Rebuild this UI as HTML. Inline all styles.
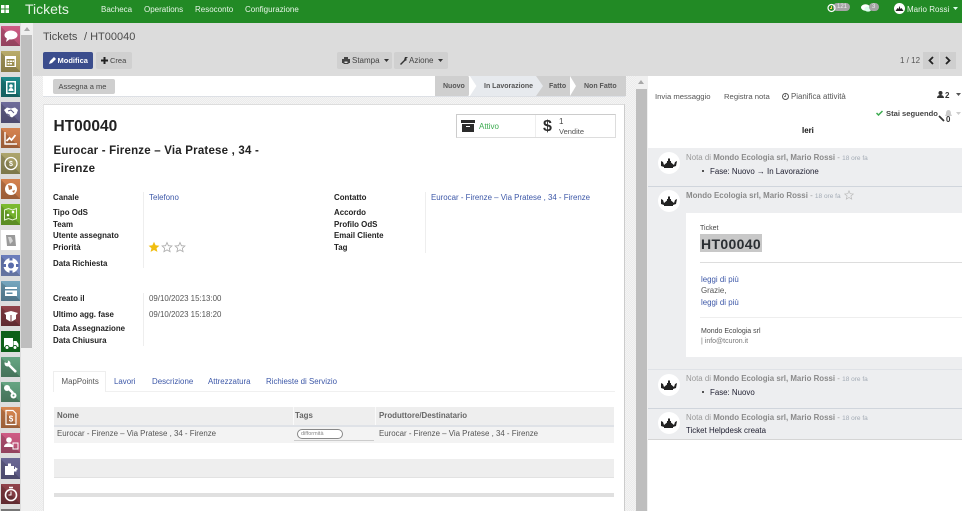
<!DOCTYPE html>
<html><head><meta charset="utf-8"><title>Tickets</title>
<style>
html,body{margin:0;padding:0;width:962px;height:511px;overflow:hidden;background:#fff;font-family:"Liberation Sans",sans-serif;color:#333}
#w{position:absolute;left:0;top:0;width:962px;height:511px;overflow:hidden;filter:blur(.3px)}
.b{position:absolute}
.t{position:absolute;white-space:nowrap;line-height:10px;font-size:7.9px;margin-top:1px}
.s{font-weight:bold;color:#222}
.l{color:#3d58a8}
.m{color:#e8f5e8;font-size:8px}
.i{position:absolute;left:1px;width:19px;height:20.5px;overflow:hidden}
.i::before{content:"";position:absolute;left:0;top:0;right:0;bottom:0;background:linear-gradient(45deg,rgba(0,0,0,.17) 50%,transparent 50%)}
.i svg{position:absolute;left:0;top:0}
.n::before{display:none}
.g{color:#9a9a9a;font-size:7.9px}
.g b{color:#8a8a8a}
.g small{font-size:6.5px;color:#a3abb5}
.pat{background:repeating-conic-gradient(#f4f4f4 0 25%,#ebebeb 0 50%) 0 0/2px 2px}
</style></head><body><div id="w">

<!-- top bar -->
<div class="b" style="left:0;top:0;width:962px;height:23px;background:#228a25"></div>
<svg class="b" style="left:1px;top:5px" width="8" height="8"><path d="M0 0h3.500v3.500H0zM4.500 0H8v3.500H4.500zM0 4.500h3.500V8H0zM4.500 4.500H8V8H4.500z" fill="#fff"/></svg>
<div class="t" style="left:25px;top:3px;font-size:14px;color:#e6f3e6">Tickets</div>
<div class="t m" style="left:101px;top:3.500px">Bacheca</div>
<div class="t m" style="left:144px;top:3.500px">Operations</div>
<div class="t m" style="left:195px;top:3.500px">Resoconto</div>
<div class="t m" style="left:245px;top:3.500px">Configurazione</div>
<div class="b" style="left:833px;top:3px;width:17px;height:8px;background:#a5a5a5;border-radius:4px"></div>
<div class="t" style="left:837px;top:1px;font-size:6px;color:#eee">121</div>
<svg class="b" style="left:827px;top:3px" width="9" height="10"><circle cx="4.500" cy="5" r="3.500" fill="none" stroke="#fff" stroke-width="1.200"/><path d="M4.500 3v2.500H3" stroke="#ffd75a" fill="none"/></svg>
<svg class="b" style="left:861px;top:4px" width="11" height="9"><ellipse cx="4.500" cy="3.500" rx="4.500" ry="3.200" fill="#fff"/><ellipse cx="7" cy="5" rx="3.500" ry="2.600" fill="#dfe"/></svg>
<div class="b" style="left:869px;top:3px;width:10px;height:8px;background:#a5a5a5;border-radius:4px"></div>
<div class="t" style="left:872px;top:1px;font-size:6px;color:#eee">3</div>
<svg class="b" style="left:894px;top:3px" width="11" height="11"><circle cx="5.500" cy="5.500" r="5.500" fill="#fff"/><path d="M1.500 8l2-3 1 1 1-3 1 3 1-1 2 3z" fill="#222"/></svg>
<div class="t" style="left:907px;top:3.500px;font-size:8px;color:#e8f5e8">Mario Rossi</div>
<svg class="b" style="left:953px;top:7px" width="5" height="3"><path d="M0 0h5L2.500 3z" fill="#dfe"/></svg>

<!-- sidebar -->
<div class="b" style="left:0;top:23px;width:21px;height:488px;background:#ddd"></div>
<div class="i" style="top:25.500px;background:linear-gradient(#cf5c85,#b04f70)"><svg width="19" height="21"><ellipse cx="10" cy="9" rx="6.500" ry="4.500" fill="#fff"/><path d="M6 12l-1 4 4-3z" fill="#fff"/></svg></div>
<div class="i" style="top:51px;background:linear-gradient(#b8ab6a,#a39556)"><svg width="19" height="21"><path d="M4 5h11v11H4z" fill="#fff"/><path d="M5.500 8h8v7h-8z" fill="#9a8d50"/><path d="M6.500 9.500h2v1.500h-2zM9 9.500h2v1.500H9zM11.500 9.500h1.500v1.500h-1.500zM6.500 12h2v1.500h-2zM9 12h2v1.500H9z" fill="#fff"/></svg></div>
<div class="i" style="top:76.500px;background:linear-gradient(#1f8a8a,#1a7272)"><svg width="19" height="21"><path d="M5 4h10v13H5z" fill="#fff"/><path d="M6.500 5.500h7v10h-7z" fill="#1a7c7c"/><circle cx="10" cy="9" r="1.800" fill="#fff"/><path d="M7.500 14c0-4 5-4 5 0z" fill="#fff"/></svg></div>
<div class="i" style="top:102px;background:linear-gradient(#6e6b99,#5d5a85)"><svg width="19" height="21"><path d="M3 8l3-2.500 4 1 4-1 3 2.500-1.500 4-4.500 3.500-4.500-2.500z" fill="#fff"/><path d="M7 9l3-1 3 3M6 12l3 1.500" fill="none" stroke="#5d5a85"/></svg></div>
<div class="i" style="top:127.500px;background:linear-gradient(#d4824f,#b96f42)"><svg width="19" height="21"><path d="M4 4v12h12" fill="none" stroke="#fff" stroke-width="1.400"/><path d="M5.500 13l3-3 2 2 4-5" fill="none" stroke="#fff" stroke-width="1.800"/></svg></div>
<div class="i" style="top:153px;background:linear-gradient(#ada46c,#96905a)"><svg width="19" height="21"><circle cx="10" cy="10.500" r="6" fill="none" stroke="#fff" stroke-width="1.300"/><text x="10" y="13" font-size="7" font-weight="bold" fill="#fff" text-anchor="middle" font-family="Liberation Sans">$</text></svg></div>
<div class="i" style="top:178.500px;background:linear-gradient(#d4824f,#b96f42)"><svg width="19" height="21"><circle cx="10" cy="10" r="6" fill="#fff"/><path d="M7 6l4 1 0 3-3 1zM11 12l3-1-1 3z" fill="#b96f42"/></svg></div>
<div class="i" style="top:204px;background:linear-gradient(#7dbb30,#6ba82a)"><svg width="19" height="21"><path d="M3.500 6l4-1.500 4 1.500 4-1.500v10l-4 1.500-4-1.500-4 1.500z" fill="none" stroke="#e8f5d8"/><circle cx="7" cy="11" r="1.300" fill="#fff"/><circle cx="12" cy="8" r="1.300" fill="#fff"/></svg></div>
<div class="i n" style="top:229.500px;background:#fff"><svg width="19" height="21"><path d="M5 5h9l1 11H6z" fill="#9a9a9a"/><path d="M7 7h3l2 4-3 3z" fill="#d5d5d5"/></svg></div>
<div class="i" style="top:255px;background:linear-gradient(#6a7cbb,#7a8cc0)"><svg width="19" height="21"><circle cx="10" cy="10.500" r="7.500" fill="#fff"/><circle cx="10" cy="10.500" r="3" fill="#5a6cab"/><path d="M8.500 3h3v2.500h-3zM8.500 15.500h3V18h-3zM2.500 9h2.500v3H2.500zM15 9h2.500v3H15z" fill="#5a6cab"/></svg></div>
<div class="i" style="top:280.500px;background:linear-gradient(#75a5bd,#5f8ba3)"><svg width="19" height="21"><path d="M4 6h12v9H4z" fill="#fff"/><path d="M4 8h12v1.500H4z" fill="#5f8ba3"/><path d="M5.500 11.500h6V13h-6z" fill="#5f8ba3"/></svg></div>
<div class="i" style="top:305.500px;background:linear-gradient(#91434a,#73333a)"><svg width="19" height="21"><path d="M3 7l7-2 7 2-2 2v4l-5 3-5-3V9z" fill="#fff"/><path d="M10 9v7" stroke="#7a383f"/></svg></div>
<div class="i n" style="top:331px;background:#0d5f18"><svg width="19" height="21"><path d="M3 7h9v9H3zM12.500 10h3l2 3v3h-5z" fill="#fff"/><circle cx="6" cy="16.500" r="2" fill="#fff" stroke="#0d5f18"/><circle cx="14" cy="16.500" r="2" fill="#fff" stroke="#0d5f18"/></svg></div>
<div class="i" style="top:356.500px;background:linear-gradient(#66a582,#538a6c)"><svg width="19" height="21"><path d="M6 6l6 6 3 3" stroke="#fff" stroke-width="2.600" fill="none"/><circle cx="6.500" cy="6.500" r="3" fill="#fff"/><circle cx="5.500" cy="4.500" r="1.500" fill="#5f9a78"/></svg></div>
<div class="i" style="top:381.500px;background:linear-gradient(#66a582,#538a6c)"><svg width="19" height="21"><path d="M6 5l6 6" stroke="#fff" stroke-width="2.600" fill="none"/><circle cx="6" cy="6" r="3" fill="#fff"/><circle cx="12.500" cy="13.500" r="3" fill="#fff"/><circle cx="12.500" cy="13.500" r="1" fill="#5f9a78"/></svg></div>
<div class="i" style="top:407px;background:linear-gradient(#d68650,#bb7344)"><svg width="19" height="21"><path d="M5 3.500h7l3 3v11H5z" fill="none" stroke="#fff" stroke-width="1.200"/><text x="10" y="14.500" font-size="8" font-weight="bold" fill="#fff" text-anchor="middle" font-family="Liberation Sans">$</text></svg></div>
<div class="i" style="top:432.500px;background:linear-gradient(#cf5c85,#b04f70)"><svg width="19" height="21"><circle cx="8" cy="7" r="2.800" fill="#fff"/><path d="M3 14c0-5 9-5 9 0z" fill="#fff"/><path d="M12 10h5v6h-5z" fill="none" stroke="#fff"/></svg></div>
<div class="i" style="top:458px;background:linear-gradient(#6a6794,#5c5983)"><svg width="19" height="21"><path d="M4 8h3V5.500h3V8h3v3h2.500v2.500H13v3.500H4z" fill="#fff"/><path d="M14 9l3 2-3 2z" fill="#fff"/></svg></div>
<div class="i" style="top:483.500px;background:linear-gradient(#91434a,#73333a)"><svg width="19" height="21"><circle cx="10" cy="11" r="5.500" fill="none" stroke="#fff" stroke-width="1.600"/><path d="M10 7.500V11H7.500" stroke="#fff" fill="none"/><path d="M8 3.500h4" stroke="#fff" stroke-width="1.500"/></svg></div>
<div class="i n" style="top:509px;background:#777"></div>

<!-- left scrollbar -->
<div class="b" style="left:21px;top:23px;width:12px;height:488px;background:#f0f0f0"></div>
<div class="b" style="left:21px;top:35px;width:11px;height:313px;background:#bebebe"></div>
<svg class="b" style="left:24px;top:27px" width="6" height="4"><path d="M3 0l3 4H0z" fill="#a8a8a8"/></svg>

<!-- control panel -->
<div class="b" style="left:33px;top:23px;width:929px;height:53px;background:#dcdcdc"></div>
<div class="t" style="left:43px;top:30.500px;font-size:11px;color:#4c4c4c">Tickets</div>
<div class="t" style="left:84px;top:30.500px;font-size:11px;color:#4c4c4c">/ HT00040</div>
<div class="b" style="left:43px;top:52px;width:50px;height:17px;background:#3b4d8d;border-radius:2px"></div>
<svg class="b" style="left:49px;top:57px" width="7" height="7"><path d="M0 7l1-3 4-4 2 2-4 4z" fill="#fff"/></svg>
<div class="t" style="left:57.500px;top:54.500px;font-size:7.500px;font-weight:bold;color:#fff">Modifica</div>
<div class="b" style="left:96px;top:52px;width:36px;height:17px;background:#d0d0d0;border-radius:2px"></div>
<svg class="b" style="left:101px;top:57px" width="7" height="7"><path d="M2.500 0h2v2.500H7v2H4.500V7h-2V4.500H0v-2h2.500z" fill="#222"/></svg>
<div class="t" style="left:110px;top:55px;font-size:7.500px;color:#444">Crea</div>
<div class="b" style="left:337px;top:52px;width:55px;height:17px;background:#d0d0d0;border-radius:2px"></div>
<div class="b" style="left:394px;top:52px;width:54px;height:17px;background:#d0d0d0;border-radius:2px"></div>
<svg class="b" style="left:342px;top:57px" width="8" height="7"><path d="M2 0h4v2h2v4H6.500v1h-5V6H0V2h2z" fill="#444"/><path d="M2.500 4.500h3V6h-3z" fill="#ddd"/></svg>
<div class="t" style="left:352px;top:55px;font-size:8px;color:#444">Stampa</div>
<svg class="b" style="left:384px;top:59px" width="5" height="3"><path d="M0 0h5L2.500 3z" fill="#333"/></svg>
<svg class="b" style="left:399.500px;top:57px" width="8" height="8"><path d="M0 7l4-4 1-3h3L6 2l1 1-2 1-4 4z" fill="#333"/></svg>
<div class="t" style="left:409px;top:55px;font-size:8px;color:#444">Azione</div>
<svg class="b" style="left:437.500px;top:59px" width="5" height="3"><path d="M0 0h5L2.500 3z" fill="#333"/></svg>
<div class="t" style="left:900px;top:55px;font-size:8px;color:#555">1 / 12</div>
<div class="b" style="left:923px;top:52px;width:16px;height:17px;background:#cfcfcf"></div>
<div class="b" style="left:940px;top:52px;width:16px;height:17px;background:#cfcfcf"></div>
<svg class="b" style="left:928px;top:56px" width="6" height="9"><path d="M5 1L1.500 4.500 5 8" fill="none" stroke="#222" stroke-width="1.800"/></svg>
<svg class="b" style="left:945px;top:56px" width="6" height="9"><path d="M1 1l3.500 3.500L1 8" fill="none" stroke="#222" stroke-width="1.800"/></svg>

<!-- main area -->
<div class="b pat" style="left:33px;top:76px;width:603px;height:435px"></div>
<div class="b" style="left:636px;top:76px;width:12px;height:435px;background:#f0f0f0"></div>
<div class="b" style="left:636px;top:89px;width:11px;height:422px;background:#bebebe"></div>
<svg class="b" style="left:638px;top:80px" width="6" height="4"><path d="M3 0l3 4H0z" fill="#a8a8a8"/></svg>

<!-- status bar -->
<div class="b" style="left:43px;top:76px;width:392px;height:20px;background:#fff"></div>
<div class="b" style="left:43px;top:96px;width:582px;height:1px;background:#dde0e5"></div>
<div class="b" style="left:53px;top:79px;width:62px;height:15px;background:#cfcfcf;border-radius:2px"></div>
<div class="t" style="left:58.500px;top:81px;font-size:7.500px;color:#444">Assegna a me</div>
<svg class="b" style="left:435px;top:76px" width="191" height="20"><path d="M0 0h191v20H0z" fill="#cfcfcf"/><path d="M34 0h67l7 10-7 10H34l6-10z" fill="#e7eaee"/><path d="M34 0l6.500 10L34 20" fill="none" stroke="#fff" stroke-width="1.500"/><path d="M34 0l6 10-6 10z" fill="#fff"/><path d="M135 0l6 10-6 10z" fill="#fff"/></svg>
<div class="t" style="left:443px;top:80.500px;font-size:7px;font-weight:bold;color:#555">Nuovo</div>
<div class="t" style="left:484px;top:80.500px;font-size:7px;font-weight:bold;color:#555">In Lavorazione</div>
<div class="t" style="left:549px;top:80.500px;font-size:7px;font-weight:bold;color:#555">Fatto</div>
<div class="t" style="left:584px;top:80.500px;font-size:7px;font-weight:bold;color:#555">Non Fatto</div>

<!-- sheet -->
<div class="b" style="left:43px;top:104px;width:582px;height:407px;background:#fff;border-top:1px solid #ddd;border-left:1px solid #e4e4e4;border-right:1px solid #ccc;box-sizing:border-box"></div>
<div class="t" style="left:53.500px;top:120.500px;font-size:15.500px;font-weight:bold;color:#222">HT00040</div>
<div class="t" style="left:53.500px;top:144.500px;font-size:11.500px;font-weight:bold;color:#222;letter-spacing:.2px">Eurocar - Firenze – Via Pratese , 34 -</div>
<div class="t" style="left:53.500px;top:162.500px;font-size:11.500px;font-weight:bold;color:#222;letter-spacing:.2px">Firenze</div>

<div class="b" style="left:456px;top:114px;width:160px;height:24px;box-sizing:border-box;border:1px solid #ddd;border-top-color:#ccc;border-left-color:#ccc"></div>
<div class="b" style="left:535px;top:115px;width:1px;height:22px;background:#eee"></div>
<svg class="b" style="left:461px;top:119px" width="14" height="14"><path d="M0 1h14v3H0zM1 5h12v8H1z" fill="#2b2b2b"/><path d="M5 7h4v1H5z" fill="#fff"/></svg>
<div class="t" style="left:479px;top:120.500px;font-size:8px;color:#3cab50">Attivo</div>
<div class="t" style="left:543px;top:117.500px;font-size:16px;line-height:16px;font-weight:bold;color:#2b2b2b">$</div>
<div class="t" style="left:559px;top:115.500px;font-size:8px;color:#444">1</div>
<div class="t" style="left:559px;top:125.500px;font-size:7.500px;color:#555">Vendite</div>

<div class="t s" style="left:53px;top:191.500px">Canale</div>
<div class="t s" style="left:53px;top:206.500px">Tipo OdS</div>
<div class="t s" style="left:53px;top:218.500px">Team</div>
<div class="t s" style="left:53px;top:230px">Utente assegnato</div>
<div class="t s" style="left:53px;top:242px">Priorità</div>
<div class="t s" style="left:53px;top:257.500px">Data Richiesta</div>
<div class="t s" style="left:53px;top:293px">Creato il</div>
<div class="t s" style="left:53px;top:308.500px">Ultimo agg. fase</div>
<div class="t s" style="left:53px;top:323px">Data Assegnazione</div>
<div class="t s" style="left:53px;top:335px">Data Chiusura</div>
<div class="b" style="left:143px;top:192px;width:1px;height:76px;background:#eee"></div>
<div class="b" style="left:143px;top:293px;width:1px;height:53px;background:#eee"></div>
<div class="t l" style="left:149px;top:191.500px">Telefono</div>
<svg class="b" style="left:148px;top:241px" width="39" height="12"><path d="M6 .8l1.600 3.500 3.800.4-2.900 2.500.9 3.700L6 9 2.600 10.900l.9-3.700L.6 4.700l3.800-.4z" fill="#f0bd0f"/><path d="M19 1.500l1.400 3.200 3.500.3-2.600 2.300.8 3.400-3.100-1.800-3.100 1.800.8-3.400L14.100 5l3.500-.3z" fill="none" stroke="#aaa" stroke-width=".8"/><path d="M32 1.500l1.400 3.200 3.500.3-2.600 2.300.8 3.400-3.100-1.800-3.100 1.800.8-3.400L27.100 5l3.500-.3z" fill="none" stroke="#aaa" stroke-width=".8"/></svg>
<div class="t" style="left:149px;top:293px;color:#555">09/10/2023 15:13:00</div>
<div class="t" style="left:149px;top:308.500px;color:#555">09/10/2023 15:18:20</div>

<div class="t s" style="left:334px;top:191.500px">Contatto</div>
<div class="t s" style="left:334px;top:206.500px">Accordo</div>
<div class="t s" style="left:334px;top:218.500px">Profilo OdS</div>
<div class="t s" style="left:334px;top:230px">Email Cliente</div>
<div class="t s" style="left:334px;top:242px">Tag</div>
<div class="b" style="left:425px;top:192px;width:1px;height:61px;background:#eee"></div>
<div class="t l" style="left:431px;top:191.500px">Eurocar - Firenze – Via Pratese , 34 - Firenze</div>

<!-- tabs -->
<div class="b" style="left:53px;top:391px;width:562px;height:1px;background:#f0f0f0"></div>
<div class="b" style="left:53px;top:371px;width:53px;height:21px;box-sizing:border-box;background:#fff;border:1px solid #eee;border-bottom:0"></div>
<div class="t" style="left:61.500px;top:375.500px;color:#555">MapPoints</div>
<div class="t l" style="left:114px;top:375.500px">Lavori</div>
<div class="t l" style="left:152px;top:375.500px">Descrizione</div>
<div class="t l" style="left:208px;top:375.500px">Attrezzatura</div>
<div class="t l" style="left:266px;top:375.500px">Richieste di Servizio</div>

<!-- table -->
<div class="b" style="left:54px;top:407px;width:560px;height:18px;background:#eee"></div>
<div class="b" style="left:54px;top:425px;width:560px;height:1.500px;background:#dfe2e7"></div>
<div class="b" style="left:54px;top:426.500px;width:560px;height:16.500px;background:#f3f3f3"></div>
<div class="b" style="left:293px;top:407px;width:1px;height:18px;background:#fafafa"></div>
<div class="b" style="left:375px;top:407px;width:1px;height:18px;background:#fafafa"></div>
<div class="t" style="left:57px;top:410px;font-weight:bold;color:#666">Nome</div>
<div class="t" style="left:295px;top:410px;font-weight:bold;color:#666">Tags</div>
<div class="t" style="left:379px;top:410px;font-weight:bold;color:#666">Produttore/Destinatario</div>
<div class="t" style="left:57px;top:428px;color:#555">Eurocar - Firenze – Via Pratese , 34 - Firenze</div>
<div class="b" style="left:297px;top:429px;width:46px;height:10px;box-sizing:border-box;border:1px solid #888;border-radius:5px;background:#fff"></div>
<div class="t" style="left:301px;top:428px;font-size:5.500px;color:#888">difformità</div>
<div class="b" style="left:294px;top:440px;width:80px;height:1px;background:#ccc"></div>
<div class="t" style="left:379px;top:428px;color:#555">Eurocar - Firenze – Via Pratese , 34 - Firenze</div>
<div class="b" style="left:54px;top:459px;width:560px;height:18px;background:#eee;border-bottom:1px solid #e2e2e2"></div>
<div class="b" style="left:54px;top:493px;width:560px;height:4px;background:#e0e0e0"></div>

<!-- chatter -->
<div class="b" style="left:648px;top:76px;width:314px;height:435px;background:#fff"></div>
<div class="t" style="left:655px;top:90.500px;font-size:7.700px;color:#555">Invia messaggio</div>
<div class="t" style="left:724px;top:90.500px;font-size:7.700px;color:#555">Registra nota</div>
<svg class="b" style="left:782px;top:92.500px" width="7" height="7"><circle cx="3.500" cy="3.500" r="3" fill="none" stroke="#555"/><path d="M3.500 1.500v2H2" fill="none" stroke="#555" stroke-width=".7"/></svg>
<div class="t" style="left:791px;top:90.500px;color:#555">Pianifica attività</div>
<svg class="b" style="left:937px;top:91px" width="7" height="7"><circle cx="3.500" cy="2" r="2" fill="#333"/><path d="M0 7c0-4 7-4 7 0z" fill="#333"/></svg>
<div class="t" style="left:945px;top:89.500px;font-size:8px;font-weight:bold;color:#333">2</div>
<svg class="b" style="left:956px;top:93px" width="5" height="3"><path d="M0 0h5L2.500 3z" fill="#555"/></svg>
<svg class="b" style="left:876px;top:110px" width="7" height="6"><path d="M.5 3l2 2L6.500 1" fill="none" stroke="#3cab50" stroke-width="1.500"/></svg>
<div class="t" style="left:886px;top:107.500px;font-size:7.600px;font-weight:bold;color:#444">Stai seguendo</div>
<svg class="b" style="left:945px;top:110px" width="7" height="7"><path d="M3.500 0c2 0 2.500 2 2.500 4l1 2H0l1-2c0-2 .5-4 2.500-4z" fill="#ccc"/></svg>
<svg class="b" style="left:938px;top:115px" width="7" height="7"><path d="M1 1l5 5" stroke="#333" stroke-width="1.800"/></svg>
<div class="t" style="left:946px;top:113.500px;font-weight:bold;color:#333">0</div>
<svg class="b" style="left:956px;top:112px" width="5" height="3"><path d="M0 0h5L2.500 3z" fill="#ccc"/></svg>
<div class="t" style="left:802px;top:124.500px;font-weight:bold;color:#111">Ieri</div>

<!-- messages -->
<div class="b" style="left:648px;top:148px;width:314px;height:291px;background:#edeef0"></div>
<div class="b" style="left:648px;top:186px;width:314px;height:1px;background:#d0d5dc"></div>
<div class="b" style="left:648px;top:369px;width:314px;height:1px;background:#dfe2e7"></div>
<div class="b" style="left:648px;top:408px;width:314px;height:1px;background:#d0d5dc"></div>
<div class="b" style="left:648px;top:439px;width:314px;height:1px;background:#d5d5d5"></div>

<svg class="b" style="left:658px;top:152px" width="22" height="22"><circle cx="11" cy="11" r="11" fill="#fff"/><path d="M3 9l2 1 1 3 3-2.500V9h1V6.500h2V9h1v1.500l3 2.500 1-3 2-1-1 5-3 1v1H6v-1l-3-1z" fill="#222"/></svg>
<svg class="b" style="left:658px;top:190px" width="22" height="22"><circle cx="11" cy="11" r="11" fill="#fff"/><path d="M3 9l2 1 1 3 3-2.500V9h1V6.500h2V9h1v1.500l3 2.500 1-3 2-1-1 5-3 1v1H6v-1l-3-1z" fill="#222"/></svg>
<svg class="b" style="left:658px;top:374px" width="22" height="22"><circle cx="11" cy="11" r="11" fill="#fff"/><path d="M3 9l2 1 1 3 3-2.500V9h1V6.500h2V9h1v1.500l3 2.500 1-3 2-1-1 5-3 1v1H6v-1l-3-1z" fill="#222"/></svg>
<svg class="b" style="left:658px;top:412px" width="22" height="22"><circle cx="11" cy="11" r="11" fill="#fff"/><path d="M3 9l2 1 1 3 3-2.500V9h1V6.500h2V9h1v1.500l3 2.500 1-3 2-1-1 5-3 1v1H6v-1l-3-1z" fill="#222"/></svg>

<div class="t g" style="left:686px;top:151.500px">Nota di <b>Mondo Ecologia srl, Mario Rossi</b> - <small>18 ore fa</small></div>
<div class="b" style="left:702px;top:170px;width:2px;height:2px;background:#222;border-radius:50%"></div>
<div class="t" style="left:710px;top:165.500px;color:#223">Fase: Nuovo → In Lavorazione</div>

<div class="t g" style="left:686px;top:189.500px"><b>Mondo Ecologia srl, Mario Rossi</b> - <small>18 ore fa</small></div>
<svg class="b" style="left:844px;top:190px" width="10" height="10"><path d="M5 .8l1.200 2.900 3.100.3-2.400 2 .8 3.100L5 7.500 2.300 9.100l.8-3.100-2.400-2 3.100-.3z" fill="none" stroke="#bbb" stroke-width=".7"/></svg>
<div class="b" style="left:686px;top:213px;width:276px;height:144px;background:#fff"></div>
<div class="t" style="left:700px;top:223px;font-size:7px;color:#444">Ticket</div>
<div class="b" style="left:700px;top:234px;width:62px;height:18px;background:#c8c8c8"></div>
<div class="t" style="left:701px;top:237.500px;font-size:14px;font-weight:bold;color:#2b2f33;letter-spacing:.35px">HT00040</div>
<div class="b" style="left:700px;top:262px;width:262px;height:1px;background:#ddd"></div>
<div class="t l" style="left:701px;top:273.500px">leggi di più</div>
<div class="t" style="left:701px;top:284.500px;color:#555">Grazie,</div>
<div class="t l" style="left:701px;top:296.500px">leggi di più</div>
<div class="b" style="left:700px;top:317px;width:262px;height:1px;background:#eee"></div>
<div class="t" style="left:701px;top:326px;font-size:7px;color:#444">Mondo Ecologia srl</div>
<div class="t" style="left:701px;top:336px;font-size:7px;color:#777">| info@tcuron.it</div>

<div class="t g" style="left:686px;top:373px">Nota di <b>Mondo Ecologia srl, Mario Rossi</b> - <small>18 ore fa</small></div>
<div class="b" style="left:702px;top:391px;width:2px;height:2px;background:#222;border-radius:50%"></div>
<div class="t" style="left:710px;top:386.500px;color:#223">Fase: Nuovo</div>
<div class="t g" style="left:686px;top:411.500px">Nota di <b>Mondo Ecologia srl, Mario Rossi</b> - <small>18 ore fa</small></div>
<div class="t" style="left:686px;top:424.500px;color:#223">Ticket Helpdesk creata</div>
</div></body></html>
